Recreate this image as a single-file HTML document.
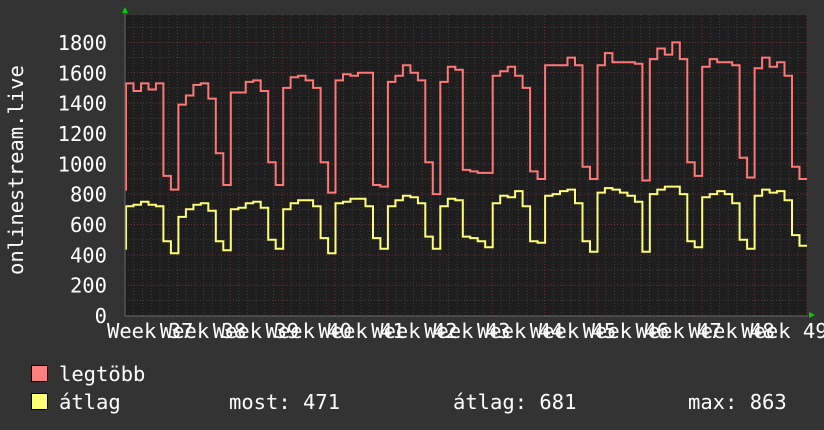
<!DOCTYPE html>
<html><head><meta charset="utf-8"><style>
html,body{margin:0;padding:0;background:#333333;}
body{width:824px;height:430px;overflow:hidden;position:relative;}
svg{position:absolute;left:0;top:0;}
text{font-family:"DejaVu Sans Mono","Liberation Mono",monospace;font-size:20.5px;fill:#ffffff;}
</style></head><body>
<svg id="g" width="824" height="430" xmlns="http://www.w3.org/2000/svg">
<rect x="125" y="15" width="682" height="301" fill="#1e1e1e"/>
<g id="grid"></g>
<path id="red" fill="none" stroke="#ff7777" stroke-width="2"/>
<path id="yel" fill="none" stroke="#ffff77" stroke-width="2"/>
<line x1="125" y1="316" x2="808" y2="316" stroke="#666" stroke-width="1"/>
<line x1="125" y1="12" x2="125" y2="316" stroke="#666" stroke-width="1"/>
<polygon points="122,13 128,13 125,7" fill="#00cc00"/>
<polygon points="809,312 809,318 815,315" fill="#00cc00"/>
<g id="ylab"></g>
<g id="xlab"></g>
<text transform="translate(23,275) rotate(-90)">onlinestream.live</text>
<rect x="31.5" y="365.5" width="16" height="16" fill="#ff7f7f" stroke="#000"/>
<rect x="31.5" y="393.5" width="16" height="16" fill="#ffff77" stroke="#000"/>
<text x="59" y="381">legtöbb</text>
<text x="59" y="409">átlag</text>
<text x="229" y="409">most: 471</text>
<text x="453" y="409">átlag: 681</text>
<text x="688" y="409">max: 863</text>
</svg>
<script>
function Y(v){return 315.5-v*0.1517;}
var grid=document.getElementById('grid'),h='';
for(var v=0;v<=1900;v+=100){var y=Y(v);var major=(v%200==0);
 h+='<line x1="125" x2="807" y1="'+y+'" y2="'+y+'" stroke="'+(major?'#6a3434':'#404040')+'" stroke-dasharray="1,2"/>';}
var sp=52.45;
for(var x=125;x<=807;x+=sp/6){var k=Math.round((x-125)/sp*6);var major=(k%6==0);
 h+='<line y1="15" y2="316" x1="'+x+'" x2="'+x+'" stroke="'+(major?'#6a3434':'#404040')+'" stroke-dasharray="1,2"/>';}
grid.innerHTML=h;
var yl='';for(var v=0;v<=1800;v+=200){yl+='<text x="107" y="'+(Y(v)+7.5)+'" text-anchor="end">'+v+'</text>';}
document.getElementById('ylab').innerHTML=yl;
var xl='';for(var k=0;k<13;k++){xl+='<text x="'+(107+52.85*k)+'" y="338">Week '+(37+k)+'</text>';}
document.getElementById('xlab').innerHTML=xl;
var R=[[1530,1480,1530,1490,1530,920,830],[1390,1450,1520,1530,1430,1070,860],[1470,1470,1540,1550,1480,1010,860],[1500,1570,1580,1550,1500,1010,810],[1550,1590,1580,1600,1600,860,850],[1540,1580,1650,1600,1550,1010,800],[1540,1640,1620,960,950,940,940],[1580,1610,1640,1580,1500,950,900],[1650,1650,1650,1700,1650,980,900],[1650,1730,1670,1670,1670,1660,890],[1690,1760,1720,1800,1690,1010,920],[1640,1690,1670,1670,1650,1040,910],[1630,1700,1640,1670,1580,980,900]];
var Ye=[[720,730,750,730,720,490,410],[650,700,730,740,690,490,430],[700,710,740,750,710,500,440],[700,740,760,760,720,510,410],[740,750,770,770,720,510,440],[720,760,790,780,740,520,440],[720,770,760,520,510,490,450],[740,790,780,820,720,490,480],[790,800,820,830,740,490,420],[810,840,830,810,790,750,420],[800,830,850,850,800,490,450],[780,800,820,800,740,500,440],[790,830,810,820,760,530,460]];
function path(D,first){var d='M125,'+Y(first);var x=126;d+=' L126,'+Y(first);
 for(var w=0;w<D.length;w++)for(var i=0;i<7;i++){var v=D[w][i];d+=' L'+x.toFixed(1)+','+Y(v).toFixed(1);x=126+(w*7+i+1)*(681/91);d+=' L'+x.toFixed(1)+','+Y(v).toFixed(1);}
 return d;}
document.getElementById('red').setAttribute('d',path(R,830));
document.getElementById('yel').setAttribute('d',path(Ye,440));
</script>
</body></html>
